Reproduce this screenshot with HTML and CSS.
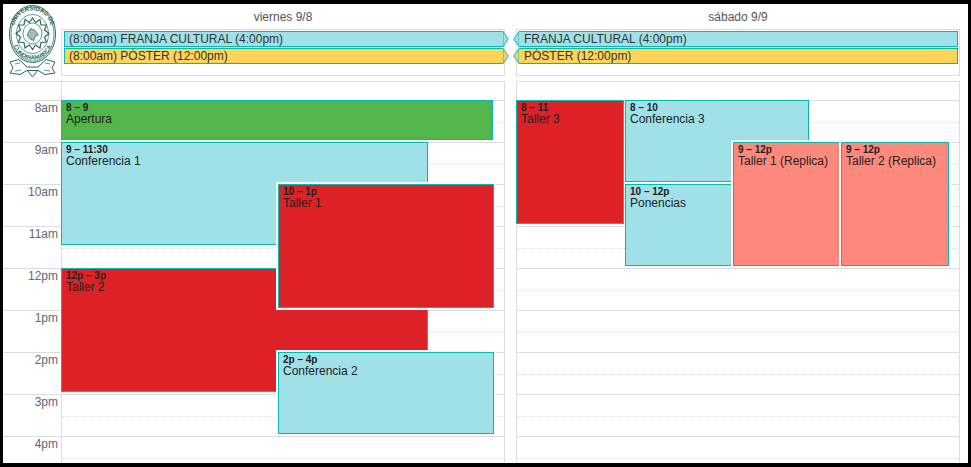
FILE: index.html
```html
<!DOCTYPE html>
<html lang="es">
<head>
<meta charset="utf-8">
<title>Agenda</title>
<link rel="stylesheet" href="styles.css">
</head>
<body>
<main class="frame">
  <header class="row head">
    <div class="axis">
      <svg class="logo" width="50" height="74" viewBox="0 0 50 74" aria-label="Universidad de Cundinamarca">
        <defs>
          <path id="arcTop" d="M6 36 C3.500 15 13 6.500 24.500 6.500 C36 6.500 45.500 15 43 36"/>
          <path id="arcBot" d="M4 33 C5 48 13 55.500 24.500 55.500 C36 55.500 44 48 45 33"/>
        </defs>
        <ellipse class="ln" cx="24.500" cy="30" rx="23" ry="28.500"/>
        <ellipse class="ln thin" cx="24.500" cy="30" rx="21.500" ry="27"/>
        <ellipse class="ln thin" cx="24.500" cy="30" rx="16" ry="19.500"/>
        <text class="lt"><textPath href="#arcTop" startOffset="50%" text-anchor="middle">UNIVERSIDAD DE</textPath></text>
        <text class="lt"><textPath href="#arcBot" startOffset="50%" text-anchor="middle">CUNDINAMARCA</textPath></text>
        <polygon class="ln star" points="24.500,14 27.500,18.500 32,15.500 33,21 38.500,21 36.500,26 41,29.500 36.500,33 38.500,38 33,38.500 32,44 27.500,41 24.500,45.500 21.500,41 17,44 16,38.500 10.500,38 12.500,33 8,29.500 12.500,26 10.500,21 16,21 17,15.500 21.500,18.500"/>
        <ellipse class="ln thin" cx="24.500" cy="29.500" rx="9.500" ry="10.500"/>
        <path class="map" d="M19 31 L22.500 24.500 L26.500 26 L30.500 31 L27 32.500 L26 36.500 L22 35 Z"/>
        <path class="ln" d="M2 58 L11 55.500 L19 63 L30 63 L38 55.500 L47 58 L44 64 L47 69 L37 70.500 L30 66.500 L19 66.500 L12 70.500 L2 69 L5 64 Z"/>
        <path class="ln" d="M19.500 66.500 L24.500 73 L29.500 66.500"/>
        <path class="ln thin" d="M7 60 L12 59 M7 67 L13 66 M37 59 L42 60 M36 66 L42 67"/>
      </svg>
    </div>
    <section class="col">
      <div class="title">viernes 9/8</div>
      <div class="allday">
        <div class="bar blue"><span class="bar-text">(8:00am) FRANJA CULTURAL (4:00pm)</span><svg class="tip" width="6" height="16" viewBox="0 0 6 16"><polygon points="0,.5 5.200,8 0,15.500"/></svg></div>
        <div class="bar yellow"><span class="bar-text">(8:00am) PÓSTER (12:00pm)</span><svg class="tip" width="6" height="16" viewBox="0 0 6 16"><polygon points="0,.5 5.200,8 0,15.500"/></svg></div>
      </div>
    </section>
    <section class="col">
      <div class="title">sábado 9/9</div>
      <div class="allday">
        <div class="bar blue cont"><svg class="tip" width="6" height="16" viewBox="0 0 6 16"><polygon points="6,.5 .8,8 6,15.500"/></svg><span class="bar-text">FRANJA CULTURAL (4:00pm)</span></div>
        <div class="bar yellow cont"><svg class="tip" width="6" height="16" viewBox="0 0 6 16"><polygon points="6,.5 .8,8 6,15.500"/></svg><span class="bar-text">PÓSTER (12:00pm)</span></div>
      </div>
    </section>
  </header>

  <div class="row grid">
    <div class="axis">
      <div class="axis-top"></div>
      <div class="hour">8am</div>
      <div class="hour">9am</div>
      <div class="hour">10am</div>
      <div class="hour">11am</div>
      <div class="hour">12pm</div>
      <div class="hour">1pm</div>
      <div class="hour">2pm</div>
      <div class="hour">3pm</div>
      <div class="hour">4pm</div>
    </div>

    <section class="col day">
      <div class="slots">
        <div class="axis-top"></div>
        <div class="slot"></div><div class="slot"></div><div class="slot"></div><div class="slot"></div><div class="slot"></div><div class="slot"></div><div class="slot"></div><div class="slot"></div><div class="slot"></div>
      </div>
      <article class="ev green e-apertura"><b>8 – 9</b><span>Apertura</span></article>
      <article class="ev blue e-conf1"><b>9 – 11:30</b><span>Conferencia 1</span></article>
      <article class="ev red e-taller2"><b>12p – 3p</b><span>Taller 2</span></article>
      <article class="ev red over e-taller1"><b>10 – 1p</b><span>Taller 1</span></article>
      <article class="ev blue over e-conf2"><b>2p – 4p</b><span>Conferencia 2</span></article>
    </section>

    <section class="col day">
      <div class="slots">
        <div class="axis-top"></div>
        <div class="slot"></div><div class="slot"></div><div class="slot"></div><div class="slot"></div><div class="slot"></div><div class="slot"></div><div class="slot"></div><div class="slot"></div><div class="slot"></div>
      </div>
      <article class="ev red e-taller3"><b>8 – 11</b><span>Taller 3</span></article>
      <article class="ev blue e-conf3"><b>8 – 10</b><span>Conferencia 3</span></article>
      <article class="ev blue e-ponencias"><b>10 – 12p</b><span>Ponencias</span></article>
      <article class="ev salmon over e-t1r"><b>9 – 12p</b><span>Taller 1 (Replica)</span></article>
      <article class="ev salmon over e-t2r"><b>9 – 12p</b><span>Taller 2 (Replica)</span></article>
    </section>
  </div>
</main>
</body>
</html>
```

FILE: styles.css
```css
* { box-sizing: border-box; }

html, body {
  margin: 0;
  height: 100%;
  overflow: hidden;
  background: #000;
}

body {
  padding: 4px 3px;
  font-family: "Liberation Sans", Arial, sans-serif;
  font-size: 12px;
  color: #333;
}

.frame {
  width: 965px;
  height: 459px;
  background: #fff;
  overflow: hidden;
}

.row { display: flex; }
.axis { width: 58px; flex: none; }
.col { width: 444px; flex: none; }
.col + .col { margin-left: 11px; }

/* header */
.head { height: 77px; }

.logo { display: block; margin: 0 0 0 5px; }
.ln { fill: none; stroke: #2a6a5e; stroke-width: 1; }
.ln.thin { stroke-width: .7; }
.ln.star { stroke-width: 1.2; }
.lt { font-family: "Liberation Sans", Arial, sans-serif; font-size: 6px; font-weight: 700; fill: #2a6a5e; }
.map { fill: #9dbdb5; stroke: #2a6a5e; stroke-width: .7; }

.title {
  height: 25px;
  line-height: 27px;
  text-align: center;
  color: #555;
}

.allday {
  height: 47px;
  border: 1px solid #ddd;
  padding-top: 1px;
}

.bar {
  display: flex;
  width: 445px;
  height: 16px;
  margin: 0 0 1px 2px;
  line-height: 14px;
  color: #333;
}
.bar.cont { margin-left: -4px; }

.bar-text {
  flex: 1;
  padding-left: 4px;
  border: 1px solid #00bbb4;
  border-right: 0;
  white-space: nowrap;
  overflow: hidden;
}
.bar.cont .bar-text {
  padding-left: 5px;
  border-left: 0;
  border-right: 1px solid #00bbb4;
}

.tip { display: block; flex: none; }
.tip polygon { stroke: #00bbb4; stroke-width: 1; }

.bar.blue .bar-text { background: #a0e1e8; }
.bar.yellow .bar-text { background: #fcd45a; }
.bar.blue .tip polygon { fill: #a0e1e8; }
.bar.yellow .tip polygon { fill: #fcd45a; }

/* time grid */
.axis-top {
  height: 19px;
  border-top: 1px solid #ddd;
}

.hour {
  height: 42px;
  border-top: 1px solid #ddd;
  padding: 0 3px 0 0;
  text-align: right;
  line-height: 14px;
  color: #666;
}

.day { position: relative; }

.slots {
  border-left: 1px solid #ddd;
  border-right: 1px solid #ddd;
}

.slot {
  height: 42px;
  border-top: 1px solid #ddd;
}
.slot::after {
  content: "";
  display: block;
  height: 21px;
  border-bottom: 1px dotted #ddd;
}

/* events */
.ev {
  position: absolute;
  display: flex;
  flex-direction: column;
  border: 1px solid #00bbb4;
  padding: 0 4px;
  color: #222;
  overflow: hidden;
}
.ev b { font-size: 10px; line-height: 11px; margin-top: 1px; }
.ev span { font-size: 12px; line-height: 13px; }

.over { box-shadow: 0 0 0 2px #fff; }

.ev.blue { background: #a0e1e8; }
.ev.green { background: #52b64a; }
.ev.red { background: #dc2127; }
.ev.salmon { background: #ff887c; }

.e-apertura { left: 0; width: 432px; top: 19px; height: 40px; }
.e-conf1 { left: 0; width: 367px; top: 61px; height: 103px; }
.e-taller2 { left: 0; width: 367px; top: 187px; height: 124px; }
.e-taller1 { left: 217px; width: 216px; top: 103px; height: 124px; }
.e-conf2 { left: 217px; width: 216px; top: 271px; height: 82px; }

.e-taller3 { left: 0; width: 108px; top: 19px; height: 124px; }
.e-conf3 { left: 109px; width: 184px; top: 19px; height: 82px; }
.e-ponencias { left: 109px; width: 107px; top: 103px; height: 82px; }
.e-t1r { left: 217px; width: 107px; top: 61px; height: 124px; }
.e-t2r { left: 325px; width: 108px; top: 61px; height: 124px; }
```
